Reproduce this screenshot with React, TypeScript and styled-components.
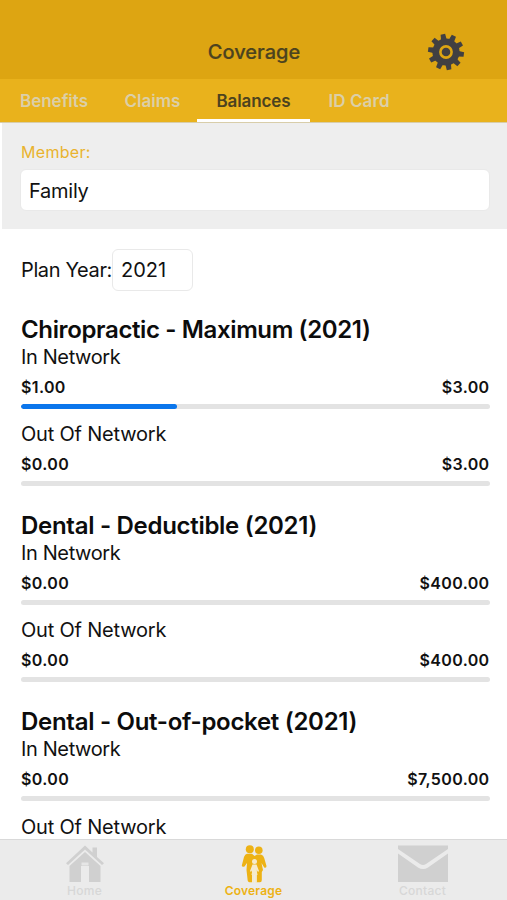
import React from "react";
import styled, { createGlobalStyle } from "styled-components";

const GlobalStyle = createGlobalStyle`
  * { box-sizing: border-box; }
  body { margin: 0; background: #fff; font-family: Inter, "Liberation Sans", sans-serif; color: #111; }
`;

const Screen = styled.div`
  width: 507px;
  height: 900px;
  display: flex;
  flex-direction: column;
  overflow: hidden;
  background: #fff;
`;

const Header = styled.header`
  height: 79px;
  flex: none;
  background: #dda512;
  display: grid;
  grid-template-columns: 1fr auto 1fr;
  align-items: end;
`;

const HeaderTitle = styled.h1`
  grid-column: 2;
  margin: 0 0 0 1px;
  font-size: 20px;
  line-height: 24px;
  height: 39px;
  font-weight: 500;
  letter-spacing: 0;
  color: #4c431f;
  -webkit-text-stroke: 0.2px #4c431f;
`;

const GearButton = styled.button`
  justify-self: end;
  width: 38px;
  height: 38px;
  margin: 0 42px 8px 0;
  padding: 0;
  border: 0;
  background: none;
  svg { display: block; }
`;

const Tabs = styled.nav`
  height: 44px;
  flex: none;
  display: flex;
  background: #e9b21c;
  border-bottom: 1px solid #d8cda9;
`;

const Tab = styled.div<{ $width: number; $active?: boolean; $spacing: number }>`
  width: ${(p) => p.$width}px;
  text-align: center;
  font-size: 17px;
  line-height: 44px;
  height: 43px;
  font-weight: 600;
  letter-spacing: ${(p) => p.$spacing}px;
  color: ${(p) => (p.$active ? "#4c431f" : "#dbcfa8")};
  box-shadow: ${(p) => (p.$active ? "inset 0 -3px #fff" : "none")};
`;

const MemberPanel = styled.section`
  height: 106px;
  flex: none;
  margin-left: 2px;
  padding: 19px 17px 0 19px;
  background: #eee;
`;

const MemberLabel = styled.div`
  font-size: 16px;
  line-height: 20px;
  letter-spacing: 0.3px;
  color: #e9b32e;
`;

const SelectBox = styled.div<{ $width: string; $margin: string; $spacing: number; $lineHeight: number }>`
  width: ${(p) => p.$width};
  height: 42px;
  margin: ${(p) => p.$margin};
  padding-left: 8px;
  border: 1px solid #e9e9e9;
  border-radius: 6px;
  background: #fff;
  font-size: 20px;
  line-height: ${(p) => p.$lineHeight}px;
  letter-spacing: ${(p) => p.$spacing}px;
`;

const Content = styled.main`
  flex: 1;
  min-height: 0;
  overflow: hidden;
  padding: 20px 17px 0 21px;
`;

const YearRow = styled.div`
  display: flex;
  align-items: center;
  font-size: 20px;
  height: 42px;
  margin-bottom: 25px;
`;

const YearLabel = styled.span`
  width: 91px;
  white-space: nowrap;
  letter-spacing: -0.38px;
`;

const Benefit = styled.section`
  height: 196.2px;
`;

const BenefitTitle = styled.h2<{ $spacing: number }>`
  margin: 0;
  font-size: 24px;
  line-height: 28px;
  font-weight: 600;
  letter-spacing: ${(p) => p.$spacing}px;
  color: #0c0c0c;
`;

const Network = styled.div`
  height: 77.2px;
`;

const NetworkLabel = styled.div<{ $spacing: number }>`
  font-size: 20px;
  line-height: 27px;
  letter-spacing: ${(p) => p.$spacing}px;
`;

const Amounts = styled.div`
  display: flex;
  justify-content: space-between;
  padding-right: 0.5px;
  font-size: 16px;
  height: 33px;
  line-height: 33px;
  font-weight: 600;
  letter-spacing: 0.36px;
`;

const Track = styled.div`
  height: 5px;
  border-radius: 3px;
  background: #e3e3e3;
  overflow: hidden;
`;

const Fill = styled.div`
  height: 100%;
  border-radius: 3px;
  background: #0b76ec;
`;

const BottomBar = styled.footer`
  height: 61px;
  flex: none;
  display: grid;
  grid-template-columns: repeat(3, 1fr);
  background: #ebebeb;
  border-top: 1px solid #d9d9d9;
`;

const NavItem = styled.div<{ $active?: boolean }>`
  display: flex;
  flex-direction: column;
  align-items: center;
  padding-top: 4px;
  font-size: 12px;
  line-height: 14px;
  color: ${(p) => (p.$active ? "#edb215" : "#d0d0d0")};
  svg { display: block; height: 40px; flex: none; }
`;

const NavLabel = styled.span<{ $active?: boolean }>`
  font-weight: ${(p) => (p.$active ? 600 : 500)};
  letter-spacing: ${(p) => (p.$active ? 0.2 : 0.25)}px;
  color: ${(p) => (p.$active ? "#edb215" : "#d7d7d7")};
`;

const GearIcon = () => (
  <svg width="38" height="38" viewBox="-19 -19 38 38">
    <g fill="#414042">
      <circle r="13.6" />
      {Array.from({ length: 10 }, (_, i) => (
        <path key={i} d="M-2.800 -12.5 L-2.3 -18 H2.3 L2.800 -12.5Z" transform={`rotate(${-10 + i * 36})`} />
      ))}
    </g>
    <circle r="5.6" fill="none" stroke="#dda512" strokeWidth="2.6" />
  </svg>
);

const HomeIcon = () => (
  <svg width="40" height="40" viewBox="0 0 40 40" fill="currentColor">
    <path d="M20 1.5 L27.500 8.500 V3.500 H32 V13 L39 19.300 L37 21 L20 5.500 L3 21 L1 19.300Z" />
    <path d="M20 8 L35.500 22 V38 H24 V22 H16 V38 H4.500 V22Z" />
    <path d="M16.500 18.500 H23.500 V21.500 H16.500Z" fill="#e6e6e6" />
  </svg>
);

const FamilyIcon = () => (
  <svg width="28" height="40" viewBox="0 0 28 40">
    <g fill="currentColor">
      <circle cx="9.800" cy="5.200" r="4" />
      <circle cx="18.800" cy="6.200" r="3.800" />
      <path d="M7 9.800 H12 L14.500 12 L17 10.500 H21 Q23.500 11 24.200 14 L26.500 22 Q26.500 24.500 24.200 23.500 L21.500 19 L23 26 L21.800 28 V36 Q21.800 38.200 20 38.200 H16.500 V25 H12 V38.200 H9.500 Q7.500 38 7.500 35 L6.500 26 L7 19 L4.500 22.500 Q2 23.500 1.800 21.500 L4 13 Q5 10.300 7 9.800Z" />
    </g>
    <g fill="#f6ebcc">
      <circle cx="14.500" cy="17.500" r="2.500" />
      <path d="M12.500 20.500 H16.500 L19 27 L18 28 L16.500 25.500 L17.500 31 H16.800 V38.500 H15 V31 H14 V38.500 H12.200 V31 H11.500 L12.500 25.500 L11 28 L10 27Z" />
    </g>
  </svg>
);

const MailIcon = () => (
  <svg width="52" height="40" viewBox="0 0 52 40" fill="currentColor">
    <path d="M1 1.500 H51 V5 L29 20 Q26 22 23 20 L1 5Z" />
    <path d="M1 9.500 L21 23.500 Q26 26.500 31 23.500 L51 9.500 V38 H1Z" />
  </svg>
);

const tabs = [
  { label: "Benefits", width: 108, spacing: 0 },
  { label: "Claims", width: 89, spacing: 0 },
  { label: "Balances", width: 113, spacing: -0.1, active: true },
  { label: "ID Card", width: 98, spacing: 0.1 },
];

const networks = [
  { name: "In Network", spacing: -0.38 },
  { name: "Out Of Network", spacing: -0.2 },
];

const benefits = [
  { title: "Chiropractic - Maximum (2021)", spacing: -0.37, used: ["$1.00", "$0.00"], limit: "$3.00", percent: [33.33, 0] },
  { title: "Dental - Deductible (2021)", spacing: -0.29, used: ["$0.00", "$0.00"], limit: "$400.00", percent: [0, 0] },
  { title: "Dental - Out-of-pocket (2021)", spacing: -0.29, used: ["$0.00", "$0.00"], limit: "$7,500.00", percent: [0, 0] },
];

export default function App() {
  return (
    <>
      <GlobalStyle />
      <Screen>
        <Header>
          <HeaderTitle>Coverage</HeaderTitle>
          <GearButton aria-label="Settings"><GearIcon /></GearButton>
        </Header>
        <Tabs>
          {tabs.map((t) => (
            <Tab key={t.label} $width={t.width} $spacing={t.spacing} $active={t.active}>{t.label}</Tab>
          ))}
        </Tabs>
        <MemberPanel>
          <MemberLabel>Member:</MemberLabel>
          <SelectBox $width="470px" $lineHeight={42} $margin="7px 0 0 -1px" $spacing={-0.25}>Family</SelectBox>
        </MemberPanel>
        <Content>
          <YearRow>
            <YearLabel>Plan Year:</YearLabel>
            <SelectBox $width="81px" $lineHeight={40} $margin="0" $spacing={0}>2021</SelectBox>
          </YearRow>
          {benefits.map((b) => (
            <Benefit key={b.title}>
              <BenefitTitle $spacing={b.spacing}>{b.title}</BenefitTitle>
              {networks.map((n, i) => (
                <Network key={n.name}>
                  <NetworkLabel $spacing={n.spacing}>{n.name}</NetworkLabel>
                  <Amounts><span>{b.used[i]}</span><span>{b.limit}</span></Amounts>
                  <Track><Fill style={{ width: `${b.percent[i]}%` }} /></Track>
                </Network>
              ))}
            </Benefit>
          ))}
        </Content>
        <BottomBar>
          <NavItem><HomeIcon /><NavLabel>Home</NavLabel></NavItem>
          <NavItem $active><FamilyIcon /><NavLabel $active>Coverage</NavLabel></NavItem>
          <NavItem><MailIcon /><NavLabel>Contact</NavLabel></NavItem>
        </BottomBar>
      </Screen>
    </>
  );
}
